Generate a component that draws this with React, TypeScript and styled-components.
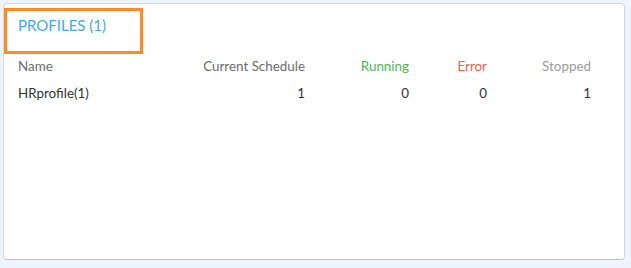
import * as React from 'react'
import styled, { createGlobalStyle } from 'styled-components'

const GlobalStyle = createGlobalStyle`
  html, body {
    margin: 0;
    padding: 0;
    background: #edf4fb;
    font-family: Lato, "Open Sans", sans-serif;
  }
`

const Page = styled.div`
  width: 631px;
  height: 268px;
  padding: 3px 6px 8px 3px;
  box-sizing: border-box;
`

const Card = styled.div`
  height: 257px;
  box-sizing: border-box;
  background: #fff;
  border: 1px solid #d4d7db;
  border-bottom-color: #bfc2c6;
  border-radius: 4px;
  padding-top: 4px;
`

const TitleBox = styled.div`
  width: 139px;
  height: 46px;
  box-sizing: border-box;
  border: 3px solid #ff8a26;
  padding: 5px 0 0 11px;
`

const Title = styled.h2`
  margin: 0;
  font-size: 15px;
  font-weight: 400;
  line-height: 18px;
  color: #44a8e8;
`

const Table = styled.div`
  margin: -2px 0 0 14px;
`

const Row = styled.div`
  display: grid;
  grid-template-columns: 183px 104px 104px 78px 104px;
  height: 27px;
  align-items: center;
  font-size: 13.4px;
  color: #333;
`

type CellProps = { $tone?: string; $left?: boolean }

const Cell = styled.div<CellProps>`
  text-align: ${(p) => (p.$left ? 'left' : 'right')};
  color: ${(p) => p.$tone || 'inherit'};
  white-space: nowrap;
`

const HEAD = [
  { label: 'Current Schedule', tone: '#6d6d6d' },
  { label: 'Running', tone: '#4cb84a' },
  { label: 'Error', tone: '#ee6048' },
  { label: 'Stopped', tone: '#9a9a9a' },
]

const ROWS = [{ name: 'HRprofile(1)', values: [1, 0, 0, 1] }]

export default function App() {
  return (
    <>
      <GlobalStyle />
      <Page>
        <Card>
          <TitleBox>
            <Title>PROFILES (1)</Title>
          </TitleBox>
          <Table>
            <Row>
              <Cell $left $tone="#6d6d6d">Name</Cell>
              {HEAD.map((h) => (
                <Cell key={h.label} $tone={h.tone}>
                  {h.label}
                </Cell>
              ))}
            </Row>
            {ROWS.map((r) => (
              <Row key={r.name}>
                <Cell $left>{r.name}</Cell>
                {r.values.map((v, i) => (
                  <Cell key={i}>{v}</Cell>
                ))}
              </Row>
            ))}
          </Table>
        </Card>
      </Page>
    </>
  )
}
